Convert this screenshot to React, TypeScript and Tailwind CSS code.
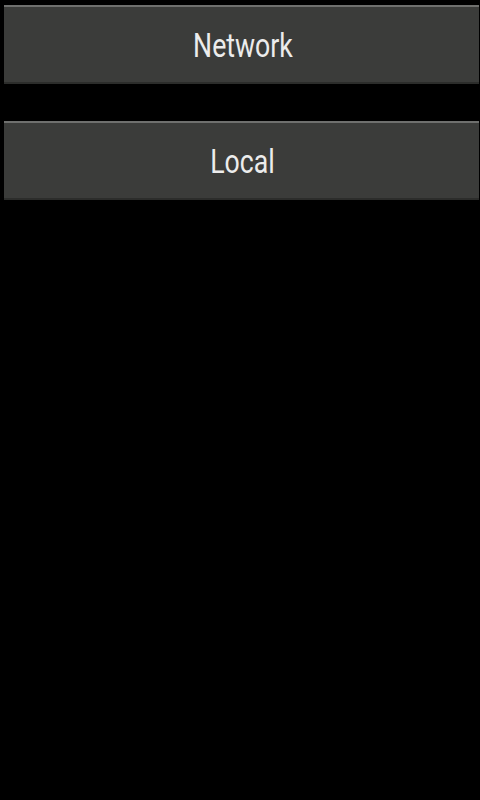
export default function App() {
  const items = ["Network", "Local"];
  return (
    <div className="min-h-[800px] w-[480px] bg-black pt-[5px]" style={{ fontFamily: "Roboto, 'Noto Sans', sans-serif" }}>
      <div className="flex flex-col gap-[37px] pl-[4px] pr-[1px]">
        {items.map((label) => (
          <button
            key={label}
            type="button"
            className="flex h-[79px] w-full items-center justify-center border-t-2 border-[#6f706e] bg-[#3b3c3a] pl-[3px] text-[#ececec] shadow-[inset_0_-2px_0_#2c2d2b]"
          >
            <span className="inline-block origin-center scale-x-[0.86] scale-y-[1.1] text-[31px] leading-none">{label}</span>
          </button>
        ))}
      </div>
    </div>
  );
}
